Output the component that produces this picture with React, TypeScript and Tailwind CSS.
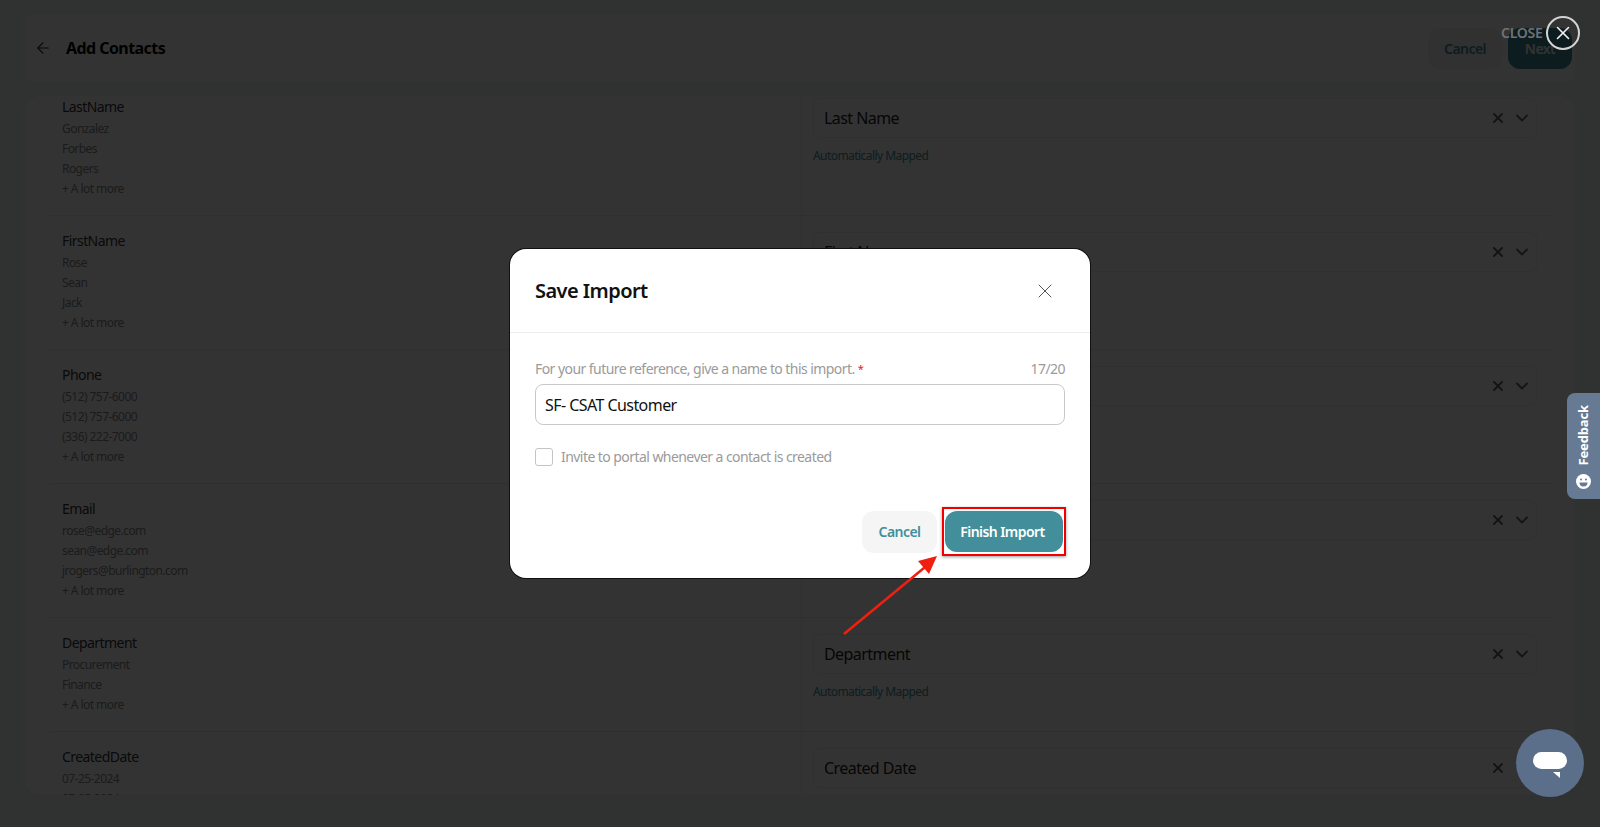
import { ArrowLeft, ChevronDown, X } from "lucide-react"

const rows = [
  { label: "LastName", values: ["Gonzalez", "Forbes", "Rogers"], field: "Last Name" },
  { label: "FirstName", values: ["Rose", "Sean", "Jack"], field: "First Name" },
  { label: "Phone", values: ["(512) 757-6000", "(512) 757-6000", "(336) 222-7000"], field: "Phone" },
  { label: "Email", values: ["rose@edge.com", "sean@edge.com", "jrogers@burlington.com"], field: "Email" },
  { label: "Department", values: ["Procurement", "Finance"], field: "Department" },
  { label: "CreatedDate", values: ["07-25-2024", "07-25-2024", "07-25-2024"], field: "Created Date" },
]

function MappingRow({ row }: { row: (typeof rows)[number] }) {
  return (
    <div className="flex border-b border-[#e8e8e8] ml-[25px] mr-[24px]">
      <div className="w-[752px] pl-[12px] pt-[13px] pb-[16px] border-r border-[#eeeeee]">
        <div className="text-[14px] leading-6 text-[#333333]">{row.label}</div>
        {row.values.map((value, i) => (
          <div key={i} className="text-[12px] leading-5 text-[#888888]">{value}</div>
        ))}
        <div className="text-[12px] leading-5 text-[#888888]">+ A lot more</div>
      </div>
      <div className="flex-1 pl-[11px] pr-[14px] pt-[16px]">
        <div className="h-[40px] flex items-center border border-[#eeeeee] rounded-md pl-[10px] pr-[4px]">
          <span className="flex-1 text-[16px] text-[#222222]">{row.field}</span>
          <X size={16} strokeWidth={3} className="text-[#666666]" />
          <ChevronDown size={20} strokeWidth={2.25} className="text-[#666666] ml-[6px]" />
        </div>
        <div className="mt-[10px] text-[12px] leading-4 text-[#428f9b]">Automatically Mapped</div>
      </div>
    </div>
  )
}

export default function App() {
  return (
    <div className="relative h-[827px] overflow-hidden bg-[#eef3f3] font-['Noto_Sans',sans-serif] tracking-[-0.035em]">
      <div className="mx-[25px] pt-[14px]">
        <div className="h-[68px] flex items-center bg-white rounded-lg pl-[9px] pr-[3px]">
          <ArrowLeft size={18} strokeWidth={1.5} className="text-[#333333]" />
          <h1 className="ml-[14px] text-[16px] font-bold text-[#000000]">Add Contacts</h1>
          <div className="ml-auto flex gap-[6px]">
            <button className="w-[74px] h-[41px] rounded-xl bg-[#f5f5f5] text-[14px] font-semibold text-[#428f9b]">Cancel</button>
            <button className="w-[64px] h-[41px] rounded-xl bg-[#428f9b] text-[14px] font-semibold text-white">Next</button>
          </div>
        </div>
        <div className="mt-[14px] h-[699px] bg-white rounded-2xl overflow-hidden">
          <div className="-mt-[14px]">
            {rows.map((row) => (
              <MappingRow key={row.label} row={row} />
            ))}
          </div>
        </div>
      </div>

      <div className="absolute inset-0 bg-black/80 flex items-center justify-center">
        <div className="w-[580px] h-[329px] bg-white rounded-2xl shadow-[0_0_0_1px_#111111] flex flex-col">
          <div className="h-[84px] shrink-0 flex items-center justify-between pl-[25px] pr-[33px] border-b border-[#eeeeee]">
            <h2 className="text-[20px] font-semibold text-[#111111]">Save Import</h2>
            <X size={24} strokeWidth={1} className="text-[#555555]" />
          </div>
          <div className="flex-1 px-[25px] pt-[26px]">
            <div className="flex justify-between text-[14px] leading-5 text-[#9a9a9a]">
              <span>
                For your future reference, give a name to this import. <span className="text-[11px] align-top text-[#e02020]">*</span>
              </span>
              <span>17/20</span>
            </div>
            <div className="mt-[5px] h-[41px] flex items-center px-[9px] border border-[#c9c9c9] rounded-lg text-[16px] text-[#111111]">
              SF- CSAT Customer
            </div>
            <label className="mt-[21px] flex items-center gap-[8px] text-[14px] text-[#9a9a9a]">
              <span className="w-[18px] h-[18px] border border-[#c4c4c4] rounded-[3px]" />
              Invite to portal whenever a contact is created
            </label>
            <div className="mt-[42px] flex justify-end items-center gap-[6px]">
              <button className="w-[75px] h-[42px] rounded-xl bg-[#f5f5f5] text-[14px] font-semibold text-[#428f9b]">Cancel</button>
              <div className="py-[2px] px-[1px] -my-[2px] -mx-[1px] border-[2px] border-[#f00000] shadow-[0_1px_3px_rgba(0,0,0,0.4)]">
                <button className="block w-[118px] h-[41px] pr-[3px] rounded-xl bg-[#428f9b] text-[14px] font-semibold text-white">Finish Import</button>
              </div>
            </div>
          </div>
        </div>
      </div>

      <svg className="absolute left-[838px] top-[550px] w-[110px] h-[90px]" viewBox="0 0 110 90">
        <line x1="6" y1="84" x2="92" y2="13" stroke="#f02010" strokeWidth="2.5" />
        <polygon points="99,6 91,24 80,11" fill="#f02010" />
      </svg>

      <div className="absolute left-[1501px] top-[23px] text-[14px] font-semibold leading-5 text-[#6e7276] tracking-[-0.02em]">CLOSE</div>
      <button className="absolute left-[1546px] top-[16px] w-[34px] h-[34px] rounded-full border-2 border-[#d4d4d4] flex items-center justify-center">
        <X size={22} strokeWidth={1.75} className="text-[#eeeeee]" />
      </button>

      <div className="absolute right-0 top-[393px] w-[33px] h-[106px] rounded-l-lg bg-[#667a94] flex flex-col items-center justify-end pb-[10px] gap-[8px]">
        <span className="[writing-mode:vertical-rl] rotate-180 text-[13px] font-bold text-white tracking-[-0.01em]">Feedback</span>
        <svg width="15" height="15" viewBox="0 0 15 15">
          <circle cx="7.5" cy="7.5" r="7.5" fill="#ffffff" />
          <circle cx="5" cy="5.5" r="1" fill="#667a94" />
          <circle cx="10" cy="5.5" r="1" fill="#667a94" />
          <path d="M3.5 8.5h8a4 4 0 0 1-8 0z" fill="#667a94" />
        </svg>
      </div>

      <div className="absolute left-[1516px] top-[729px] w-[68px] h-[68px] rounded-full bg-[#5b6f8a] flex items-center justify-center">
        <svg className="mt-[5px]" width="34" height="27" viewBox="0 0 34 27">
          <rect x="0" y="0" width="34" height="17" rx="8.5" fill="#ffffff" />
          <polygon points="20,20 27,20 27,26" fill="#ffffff" />
        </svg>
      </div>
    </div>
  )
}
